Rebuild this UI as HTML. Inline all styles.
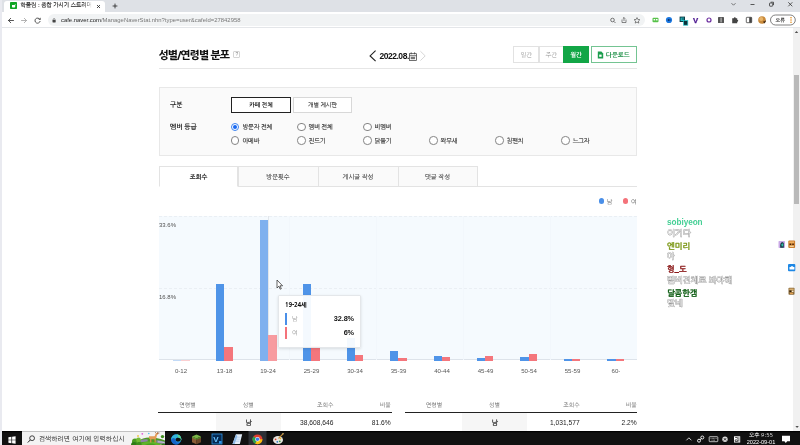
<!DOCTYPE html>
<html lang="ko">
<head>
<meta charset="utf-8">
<title>성별/연령별 분포</title>
<style>
html,body{margin:0;padding:0;}
body{width:800px;height:445px;overflow:hidden;background:#fff;position:relative;
  font-family:"Liberation Sans","NanumGothic","Noto Sans CJK KR",sans-serif;color:#222;}
.a{position:absolute;white-space:nowrap;line-height:1;}
.k{font-family:"NanumGothic","Liberation Sans","Noto Sans CJK KR",sans-serif;}
.b{font-weight:bold;}
/* chrome */
#tabstrip{left:0;top:0;width:800px;height:12px;background:#dee1e6;}
#tab{left:3.500px;top:1px;width:101.500px;height:12px;background:#fff;border-radius:3px 3px 0 0;}
#toolbar{left:0;top:12px;width:800px;height:16px;background:#fff;border-bottom:1px solid #e4e6e9;box-sizing:border-box;}
#omni{left:48px;top:14px;width:597px;height:12px;border-radius:6px;background:#f1f3f4;}
.t5{font-size:5.4px;}
.t6{font-size:6px;}
/* page */
.btn{box-sizing:border-box;border:1px solid #e2e2e2;background:#fff;text-align:center;}
.radio{width:8.400px;height:8.400px;border:0.800px solid #858585;border-radius:50%;box-sizing:border-box;background:#fff;}
.rl{font-size:6.200px;color:#333;letter-spacing:-0.200px;margin-top:0.400px;-webkit-text-stroke:0.150px #333;}
.tab{box-sizing:border-box;border:1px solid #e3e3e3;background:#fafafa;height:21px;top:166px;text-align:center;font-size:6.2px;color:#444;line-height:20.600px;-webkit-text-stroke:0.120px #444;}
.bar{position:absolute;padding-bottom:0.600px;}
.bl{background:#4f94e8;}
.rd{background:#f4767c;}
.xl{font-size:6.100px;color:#585858;top:367.800px;width:40px;text-align:center;font-family:"Liberation Sans",sans-serif;}
.th{font-size:5.830px;color:#666;top:402.600px;}
.td{font-size:6.67px;color:#222;top:419.500px;font-family:"Liberation Sans","NanumGothic",sans-serif;}
.chat{font-size:8.100px;left:667px;font-weight:bold;-webkit-text-stroke:0.250px currentColor;}
.msg{font-size:8.400px;left:667px;color:#fdfdfd;-webkit-text-stroke:0.900px #989898;paint-order:stroke fill;}
</style>
</head>
<body>
<div id="wrap" style="position:absolute;left:0;top:0;width:800px;height:445px;overflow:hidden;will-change:transform;">
<!-- ===== browser chrome ===== -->
<div class="a" id="tabstrip"></div>
<div class="a" id="tab"></div>
<svg class="a" style="left:10px;top:2.200px" width="7" height="7" viewBox="0 0 7 7"><rect width="7" height="7" rx="0.700" fill="#0fa524"/><path d="M2 3h2.600l.500-.900.500.300-.400.800v1.600a.800.800 0 0 1-.800.800H2.800a.800.800 0 0 1-.800-.800z" fill="#fff"/></svg>
<div class="a k t5" style="left:20.500px;top:3.100px;color:#1a1a1a;font-size:5.700px;letter-spacing:-0.050px;-webkit-text-stroke:0.150px #1a1a1a;">학폴림 : 종합 가시기 스트리머</div>
<div class="a" style="left:84px;top:1px;width:10px;height:11px;background:linear-gradient(90deg,rgba(255,255,255,0),#fff 80%);"></div>
<svg class="a" style="left:96px;top:3.500px" width="5" height="5" viewBox="0 0 5 5"><path d="M1 1l3 3M4 1L1 4" stroke="#222" stroke-width="0.800"/></svg>
<svg class="a" style="left:111.500px;top:2.600px" width="6" height="6" viewBox="0 0 6 6"><path d="M3 .600v4.800M.600 3h4.800" stroke="#222" stroke-width="0.800"/></svg>
<div class="a" id="toolbar"></div>
<svg class="a" style="left:0;top:12px" width="50" height="16" viewBox="0 0 50 16">
 <g fill="none" stroke="#444" stroke-width="0.9" stroke-linecap="round" stroke-linejoin="round">
  <path d="M8.5 8.5h5M8.5 8.5l2.2-2.2M8.5 8.5l2.2 2.2"/>
  <path d="M21.5 8.5h5M26.5 8.5l-2.2-2.2M26.5 8.5l-2.2 2.2" stroke="#aaa"/>
  <path d="M39.8 7.2a2.6 2.6 0 1 0 .3 2.2"/>
 </g>
 <path d="M40.6 5.5v2.2h-2.2z" fill="#444"/>
</svg>
<div class="a" id="omni"></div>
<svg class="a" style="left:52.400px;top:17.600px" width="4.200" height="5" viewBox="0 0 5 6"><rect x="0.6" y="2.4" width="3.8" height="3" rx="0.5" fill="#444"/><path d="M1.4 2.6V1.8a1.1 1.1 0 0 1 2.2 0v.8" fill="none" stroke="#444" stroke-width="0.7"/></svg>
<div class="a" style="left:61px;top:17.700px;font-size:5.900px;color:#222;">cafe.naver.com<span style="color:#777">/ManageNaverStat.nhn?type=user&amp;cafeId=27842958</span></div>
<!-- window controls -->
<svg class="a" style="left:725px;top:0" width="75" height="12" viewBox="0 0 75 12">
 <g fill="none" stroke="#333" stroke-width="0.8">
  <path d="M6.5 3.2l2 2 2-2" stroke="#555"/>
  <path d="M25.5 4.5h4"/>
  <rect x="44.5" y="3" width="3.2" height="3.2" rx="0.5"/><path d="M45.7 2.2h2.8v2.8"/>
  <path d="M63.3 2.3l4 4M67.3 2.3l-4 4"/>
 </g>
</svg>
<!-- toolbar right icons -->
<svg class="a" style="left:480px;top:12px" width="320" height="16" viewBox="0 0 320 16">
 <g fill="none" stroke="#555" stroke-width="0.8" transform="translate(108.500 0)">
  <circle cx="24" cy="8" r="1.8"/><path d="M25.4 9.4l1.6 1.6"/>
  <path d="M33.5 7.5v3h4v-3M35.5 9V5.5M34.3 6.7l1.2-1.2 1.2 1.2" stroke-width="0.7"/>
  <path d="M48.5 5.6l.9 1.9 2 .2-1.5 1.4.4 2-1.8-1-1.8 1 .4-2-1.5-1.4 2-.2z" stroke-width="0.7"/>
 </g>
 <rect x="172.5" y="5.8" width="6" height="4.4" rx="1" fill="#57c24a"/><rect x="173.6" y="7" width="1.6" height="1.4" fill="#fff"/><rect x="176" y="7" width="1.6" height="1.4" fill="#fff"/>
 <circle cx="189" cy="8" r="3.1" fill="#1c78e0"/><path d="M187.4 8l1.6-1.2v.8h1.6v.8h-1.6v.8z" fill="#0b2b5c"/>
 <rect x="199.600" y="4.600" width="5.400" height="5.400" fill="#0e3a44"/><rect x="200.600" y="5.600" width="3.400" height="3.400" fill="#27c6cc"/><rect x="201.600" y="6.500" width="2.400" height="1" fill="#0e3a44"/><rect x="203.600" y="8.600" width="4.200" height="4.600" fill="#0b2f38" stroke="#27c6cc" stroke-width="0.700"/>
 <text x="213" y="10.6" font-family="Liberation Sans, sans-serif" font-weight="bold" font-size="7.800" fill="#4b168f" stroke="#4b168f" stroke-width="0.250">V</text>
 <circle cx="229" cy="8" r="2" fill="none" stroke="#6a2c9e" stroke-width="1.2"/>
 <rect x="238" y="5" width="6" height="6" rx="0.6" fill="#555"/><rect x="240.6" y="5.6" width="0.9" height="4.8" fill="#ddd"/>
 <path d="M252.2 6.2h1.6a1 1 0 1 1 2 0h1.4v1.6a1 1 0 1 1 0 2v1.4h-5z" fill="#444"/>
 <rect x="266.3" y="5.3" width="5.4" height="5.4" rx="0.6" fill="none" stroke="#444" stroke-width="0.8"/><rect x="269.2" y="5.3" width="2.5" height="5.4" fill="#444"/>
 <circle cx="282" cy="8" r="3.8" fill="#c98a3b"/><circle cx="281.2" cy="7" r="2" fill="#e8b56b"/><path d="M283 9.5a2 2 0 0 0 2.4-1.5l.4 1.8-1.6 1.6z" fill="#3a2412"/>
 <rect x="290.5" y="3" width="24.8" height="10" rx="5" fill="#fff" stroke="#4a4a4a" stroke-width="0.7"/>
 <circle cx="311" cy="5.800" r="0.750" fill="#e5860a"/><circle cx="311" cy="8" r="0.750" fill="#e5860a"/><circle cx="311" cy="10.200" r="0.750" fill="#e5860a"/>
</svg>
<div class="a k" style="left:775.600px;top:17.700px;font-size:5px;color:#333;font-weight:bold;">오류</div>

<!-- page scrollbar -->
<div class="a" style="left:0;top:0;width:1.500px;height:431px;background:#e9eaf0;"></div>
<div class="a" style="left:793.300px;top:28px;width:6.700px;height:403px;background:#f1f1f1;"></div>
<svg class="a" style="left:793.800px;top:423px" width="6.200" height="8" viewBox="0 0 6.200 8"><path d="M1.400 3l1.700 2 1.700-2z" fill="#505050"/></svg>
<div class="a" style="left:794.100px;top:75px;width:4.900px;height:129px;background:#b9b9b9;"></div>
<svg class="a" style="left:793px;top:28px" width="7" height="8" viewBox="0 0 7 8"><path d="M1.8 5l1.7-2 1.7 2z" fill="#505050"/></svg>

<!-- ===== page content ===== -->
<div class="a k" id="h1" style="font-weight:800;left:158.500px;top:51.200px;font-size:10.900px;letter-spacing:-0.920px;color:#111;">성별/연령별 분포</div>
<div class="a" style="left:233.400px;top:51.200px;width:7px;height:7px;box-sizing:border-box;border:0.700px solid #d4d4d4;border-radius:1px;font-size:5px;color:#888;text-align:center;line-height:5.800px;">?</div>

<svg class="a" style="left:365px;top:46px" width="70" height="20" viewBox="0 0 70 20">
 <path d="M10.6 4.600L5.100 9.900l5.500 5.300" fill="none" stroke="#222" stroke-width="1.150"/>
 <path d="M55.4 5.2l4.8 4.7-4.8 4.7" fill="none" stroke="#ccc" stroke-width="0.8"/>
 <g fill="none" stroke="#333" stroke-width="0.7"><rect x="44.400" y="7.700" width="7" height="6.800"/><path d="M44.400 9.700h7M46.200 6.300v2M49.600 6.300v2"/></g>
 <rect x="45.700" y="10.800" width="4.400" height="2.400" fill="#777"/>
</svg>
<div class="a b" id="date" style="left:379.400px;top:51.500px;font-size:8.500px;letter-spacing:-0.460px;color:#111;">2022.08.</div>

<div class="a btn" style="left:512.800px;top:46px;width:26.700px;height:17px;"></div>
<div class="a btn" style="left:538.5px;top:46px;width:25.5px;height:17px;"></div>
<div class="a" style="left:563px;top:46px;width:26px;height:17px;background:#12a646;"></div>
<div class="a" style="left:591px;top:46px;width:46px;height:17px;box-sizing:border-box;border:1px solid #74c492;background:#fff;"></div>
<div class="a k" style="left:520.5px;top:52px;font-size:6.2px;color:#999;">일간</div>
<div class="a k" style="left:545.5px;top:52px;font-size:6.2px;color:#999;">주간</div>
<div class="a k b" style="left:570.3px;top:52px;font-size:6.2px;color:#fff;">월간</div>
<svg class="a" style="left:597px;top:51.2px" width="7" height="8" viewBox="0 0 7 8"><path d="M0.8 0.6h3.6l1.8 1.8v5H0.8z" fill="#1c9e4e"/><rect x="2.2" y="3.6" width="2.4" height="2.2" fill="#fff"/></svg>
<div class="a k b" style="left:606px;top:52px;font-size:6.3px;color:#138a3e;">다운로드</div>

<div class="a" style="left:158.600px;top:68px;width:478.400px;height:1px;background:#e6e6e6;"></div>

<!-- filter box -->
<div class="a" style="left:158.600px;top:87.300px;width:478.400px;height:68.700px;box-sizing:border-box;border:1px solid #e8e8e8;background:#fafafa;"></div>
<div class="a k b" style="left:170px;top:101.5px;font-size:6.6px;color:#222;">구분</div>
<div class="a k b" style="left:170px;top:123.5px;font-size:6.6px;color:#222;">멤버 등급</div>
<div class="a btn k b" style="left:231px;top:97px;width:60px;height:16px;border-color:#222;font-size:5.8px;line-height:14px;color:#111;">카페 전체</div>
<div class="a btn k" style="left:293px;top:97px;width:59px;height:16px;border-color:#d8d8d8;font-size:5.800px;line-height:14px;color:#333;-webkit-text-stroke:0.120px #333;">개별 게시판</div>

<div class="a radio" style="left:231.10px;top:122.90px;border-color:#3b82f0;"></div>
<div class="a" style="left:233.10px;top:124.90px;width:4.4px;height:4.4px;border-radius:50%;background:#1667f2;"></div>
<div class="a k rl" style="left:242.50px;top:124.00px;">방문자 전체</div>
<div class="a radio" style="left:297.13px;top:122.90px;"></div>
<div class="a k rl" style="left:308.53px;top:124.00px;">멤버 전체</div>
<div class="a radio" style="left:363.16px;top:122.90px;"></div>
<div class="a k rl" style="left:374.56px;top:124.00px;">비멤버</div>
<div class="a radio" style="left:231.10px;top:136.30px;"></div>
<div class="a k rl" style="left:242.50px;top:137.40px;">아메바</div>
<div class="a radio" style="left:297.13px;top:136.30px;"></div>
<div class="a k rl" style="left:308.53px;top:137.40px;">진드기</div>
<div class="a radio" style="left:363.16px;top:136.30px;"></div>
<div class="a k rl" style="left:374.56px;top:137.40px;">닭둘기</div>
<div class="a radio" style="left:429.19px;top:136.30px;"></div>
<div class="a k rl" style="left:440.59px;top:137.40px;">왁무새</div>
<div class="a radio" style="left:495.22px;top:136.30px;"></div>
<div class="a k rl" style="left:506.62px;top:137.40px;">침팬치</div>
<div class="a radio" style="left:561.25px;top:136.30px;"></div>
<div class="a k rl" style="left:572.65px;top:137.40px;">느그자</div>

<!-- tabs -->
<div class="a" style="left:158.600px;top:186px;width:478.400px;height:1px;background:#e3e3e3;"></div>
<div class="a tab k" style="left:237.5px;width:81px;">방문횟수</div>
<div class="a tab k" style="left:317.5px;width:81px;">게시글 작성</div>
<div class="a tab k" style="left:397.5px;width:80px;">댓글 작성</div>
<div class="a tab k b" style="left:158.600px;width:79.900px;background:#fff;border-bottom-color:#fff;color:#222;">조회수</div>

<!-- legend -->
<div class="a" style="left:598.700px;top:198.300px;width:5.400px;height:5.400px;border-radius:50%;background:#4a8fe8;"></div>
<div class="a k" style="left:606.800px;top:198.600px;font-size:6.200px;color:#666;">남</div>
<div class="a" style="left:622.900px;top:198.300px;width:5.400px;height:5.400px;border-radius:50%;background:#f4727a;"></div>
<div class="a k" style="left:631px;top:198.600px;font-size:6.200px;color:#666;">여</div>

<!-- chart -->
<div class="a" id="chart" style="left:159px;top:216px;width:478px;height:144px;background:#f5fafe;"></div>
<div class="a" style="left:159px;top:216px;width:478px;height:0;border-top:1px dashed #eaeff4;"></div>
<div class="a" style="left:159px;top:287.5px;width:478px;height:0;border-top:1px dashed #eaeff4;"></div>
<div class="a" style="left:159px;top:359.300px;width:478px;height:1px;background:#dde3ea;"></div>
<div class="a" style="left:289px;top:216px;width:1px;height:144px;background:#f2f7fc;"></div>
<div class="a" style="left:376px;top:216px;width:1px;height:144px;background:#f2f7fc;"></div>
<div class="a" style="left:463px;top:216px;width:1px;height:144px;background:#f2f7fc;"></div>
<div class="a" style="left:550px;top:216px;width:1px;height:144px;background:#f2f7fc;"></div>
<div class="a" style="left:267.800px;top:216px;width:1px;height:144px;background:#e2e6eb;"></div>
<div class="a" style="left:159px;top:222.300px;font-size:6px;color:#505050;">33.6%</div>
<div class="a" style="left:159px;top:293.900px;font-size:6px;color:#505050;">16.8%</div>

<div class="bar bl" style="left:172.5px;top:359.5px;width:8.5px;height:1px;opacity:.35"></div>
<div class="bar rd" style="left:181px;top:359.5px;width:8.5px;height:1px;opacity:.35"></div>
<div class="bar bl" style="left:216px;top:284px;width:8.3px;height:76px;"></div>
<div class="bar rd" style="left:224.3px;top:346.5px;width:8.3px;height:13.5px;"></div>
<div class="bar" style="left:259.5px;top:220px;width:8.5px;height:140px;background:#7fb0ee;"></div>
<div class="bar" style="left:268px;top:335px;width:8.5px;height:25px;background:#f79ba0;"></div>
<div class="bar bl" style="left:303px;top:283.5px;width:8.3px;height:76.5px;"></div>
<div class="bar rd" style="left:311.3px;top:346px;width:8.3px;height:14px;"></div>
<div class="bar bl" style="left:346.5px;top:338.200px;width:8.3px;height:21.800px;"></div>
<div class="bar rd" style="left:354.8px;top:354.5px;width:8.3px;height:5.5px;"></div>
<div class="bar bl" style="left:390px;top:351px;width:8.3px;height:9px;"></div>
<div class="bar rd" style="left:398.3px;top:357.5px;width:8.3px;height:2.5px;"></div>
<div class="bar bl" style="left:433.5px;top:356px;width:8.3px;height:4px;"></div>
<div class="bar rd" style="left:441.8px;top:357px;width:8.3px;height:3px;"></div>
<div class="bar bl" style="left:476.8px;top:357.5px;width:8.3px;height:2.5px;"></div>
<div class="bar rd" style="left:485.1px;top:355.5px;width:8.3px;height:4.5px;"></div>
<div class="bar bl" style="left:520.3px;top:357px;width:8.3px;height:3px;"></div>
<div class="bar rd" style="left:528.6px;top:353.5px;width:8.3px;height:6.5px;"></div>
<div class="bar bl" style="left:563.8px;top:359px;width:8.3px;height:1.5px;"></div>
<div class="bar rd" style="left:572.1px;top:359px;width:8.3px;height:1.5px;"></div>
<div class="bar bl" style="left:607.3px;top:359px;width:8.3px;height:1.5px;"></div>
<div class="bar rd" style="left:615.6px;top:359px;width:8.3px;height:1.5px;"></div>

<div class="a xl" style="left:161px;">0-12</div>
<div class="a xl" style="left:204.5px;">13-18</div>
<div class="a xl" style="left:248px;">19-24</div>
<div class="a xl" style="left:291.5px;">25-29</div>
<div class="a xl" style="left:335px;">30-34</div>
<div class="a xl" style="left:378.5px;">35-39</div>
<div class="a xl" style="left:422px;">40-44</div>
<div class="a xl" style="left:465.5px;">45-49</div>
<div class="a xl" style="left:509px;">50-54</div>
<div class="a xl" style="left:552.5px;">55-59</div>
<div class="a xl" style="left:596px;">60-</div>

<!-- tooltip -->
<div class="a" id="tip" style="left:278.200px;top:295px;width:83px;height:53px;box-sizing:border-box;background:rgba(255,255,255,.94);border:1px solid #e4e7ea;border-radius:1px;box-shadow:0 1px 3px rgba(0,0,0,.12);"></div>
<div class="a k" style="left:285px;top:302px;font-size:6.100px;font-weight:800;letter-spacing:-0.200px;color:#111;">19-24세</div>
<div class="a" style="left:285px;top:313px;width:1.6px;height:12px;background:#4a8fe8;"></div>
<div class="a" style="left:285px;top:327px;width:1.6px;height:12px;background:#f4727a;"></div>
<div class="a k" style="left:292px;top:316px;font-size:6.2px;color:#999;">남</div>
<div class="a k" style="left:292px;top:330px;font-size:6.2px;color:#999;">여</div>
<div class="a b" style="left:314px;top:315.2px;width:40px;text-align:right;font-size:7.3px;letter-spacing:-0.1px;color:#111;">32.8%</div>
<div class="a b" style="left:314px;top:329.2px;width:40px;text-align:right;font-size:7.3px;letter-spacing:-0.1px;color:#111;">6%</div>
<!-- cursor -->
<svg class="a" style="left:276px;top:279px" width="8" height="12" viewBox="0 0 8 12"><path d="M1 1v8l1.9-1.8 1.3 3 1.1-.5-1.3-2.9H6.600z" fill="#fff" stroke="#222" stroke-width="0.7" stroke-linejoin="round"/></svg>

<!-- tables -->
<div class="a k th" style="left:167.5px;width:40px;text-align:center;">연령별</div>
<div class="a k th" style="left:228.2px;width:40px;text-align:center;">성별</div>
<div class="a k th" style="left:293.5px;width:40px;text-align:right;">조회수</div>
<div class="a k th" style="left:350.7px;width:40px;text-align:right;">비율</div>
<div class="a k th" style="left:413.9px;width:40px;text-align:center;">연령별</div>
<div class="a k th" style="left:474.5px;width:40px;text-align:center;">성별</div>
<div class="a k th" style="left:539.8px;width:40px;text-align:right;">조회수</div>
<div class="a k th" style="left:596.7px;width:40px;text-align:right;">비율</div>
<div class="a" style="left:158.4px;top:411.8px;width:233.2px;height:1.1px;background:#222;"></div>
<div class="a" style="left:404.7px;top:411.8px;width:232.2px;height:1.1px;background:#222;"></div>
<div class="a" style="left:215.6px;top:413px;width:65.7px;height:18px;background:#f6f6f6;"></div>
<div class="a" style="left:461.6px;top:413px;width:65.9px;height:18px;background:#f6f6f6;"></div>
<div class="a k td" style="-webkit-text-stroke:0.250px #222;left:228.400px;width:40px;text-align:center;">남</div>
<div class="a k td" style="-webkit-text-stroke:0.250px #222;left:474.700px;width:40px;text-align:center;">남</div>
<div class="a td" style="left:273.4px;width:60px;text-align:right;">38,608,646</div>
<div class="a td" style="left:350.7px;width:40px;text-align:right;">81.6%</div>
<div class="a td" style="left:519.7px;width:60px;text-align:right;">1,031,577</div>
<div class="a td" style="left:596.7px;width:40px;text-align:right;">2.2%</div>

<!-- chat overlay -->
<div class="a" style="left:637px;top:192px;width:156.300px;height:125px;background:#fff;"></div>
<div class="a chat" style="top:218.800px;color:#45cf95;-webkit-text-stroke:0;font-size:8.200px;letter-spacing:-0.050px;">sobiyeon</div>
<div class="a k msg" style="top:229px;">이거다</div>
<div class="a k chat" style="top:241.5px;color:#7f9a1c;">엔미리</div>
<div class="a k msg" style="top:252px;">아</div>
<div class="a k chat" style="top:265px;color:#8a1717;">형_도</div>
<div class="a k msg" style="top:275.5px;">멤버전체로 봐야해</div>
<div class="a k chat" style="top:288.5px;color:#0c5c12;">달콤한갬</div>
<div class="a k msg" style="top:299px;">맞네</div>
<svg class="a" style="left:776px;top:238px" width="22" height="60" viewBox="0 0 22 60">
 <rect x="2.500" y="3" width="6.500" height="7" rx="0.800" fill="#c9a9e6"/><path d="M4.200 9.800V7.200c0-1.600.700-2.800 2-3 .9-.1 1.600.5 1.600 1.300v4.300z" fill="#163646"/><path d="M5.300 6.200c.5-.9 1.500-1 2-.3l-.300 2.300-1.300.2z" fill="#2fbfa6"/>
 <rect x="12.300" y="2.600" width="6.800" height="7.400" rx="1" fill="#c97a2c"/><rect x="13.300" y="3.400" width="4.800" height="2" fill="#f0b060"/><rect x="13.600" y="5.600" width="1.500" height="1.300" fill="#3a1d08"/><rect x="16.300" y="5.600" width="1.500" height="1.300" fill="#3a1d08"/><rect x="13.600" y="7.600" width="4.200" height="1.500" fill="#f6d39a"/>
 <rect x="12" y="26" width="7.300" height="7.200" rx="1" fill="#1e88e5"/><path d="M13.500 31.400v-2.300h1.100l.7-.9h1.400l.7.900h1v2.300z" fill="#fff"/>
 <rect x="12.500" y="49.700" width="6" height="7" rx="0.800" fill="#8a6a3a"/><rect x="13.300" y="50.500" width="4.400" height="1.600" fill="#d8b070"/><rect x="13.500" y="52.600" width="1.500" height="1.400" fill="#2a1a0a"/><rect x="16" y="52.600" width="1.500" height="1.400" fill="#f4e8d0"/><rect x="14" y="54.700" width="3" height="1.300" fill="#e0a050"/>
</svg>
<!-- ===== taskbar ===== -->
<div class="a" id="tb" style="left:0;top:431px;width:800px;height:17px;background:#111;box-shadow:inset 0 1.300px 0 #000;">
<div class="a" style="left:0;top:0;width:2px;height:17px;background:#e9eaf0;"></div>
<svg class="a" style="left:8px;top:4.700px" width="8" height="8" viewBox="0 0 8 8"><path d="M0.400 1.250l3-.42v2.820h-3zM4.100.750l3.500-.5v3.400H4.100zM0.400 4.350h3v2.820l-3-.42zM4.100 4.350h3.500v3.400l-3.500-.5z" fill="#fff"/></svg>
<div class="a" style="left:22px;top:0;width:143px;height:17px;background:#f3f3f3;border-top:0.600px solid #c2c2c2;box-sizing:border-box;"></div>
<svg class="a" style="left:26.500px;top:4.300px" width="8.500" height="8.500" viewBox="0 0 8.500 8.500"><circle cx="5.100" cy="3.200" r="2.400" fill="none" stroke="#222" stroke-width="0.850"/><path d="M3.400 4.900L0.800 7.500" stroke="#222" stroke-width="1"/></svg>
<div class="a k" style="left:38.700px;top:4.900px;font-size:6.500px;letter-spacing:0.200px;color:#111;">검색하려면 여기에 입력하십시</div>
<!-- search highlight art -->
<svg class="a" style="left:129px;top:0.600px" width="36" height="16.400" viewBox="0 0 36 16.400">
 <path d="M9 9.500c3-3.200 8-4.300 13-4 5 .3 10 1.300 14 3v4H9z" fill="#4f9a24"/>
 <path d="M11 8.200c2.500-1 5-1.200 7.500-.9l.3 2.100-7.300.8z" fill="#8b87a6"/>
 <path d="M27.500 8.300c2.800 0 5.700.6 8.500 1.500v2.400c-2.800-.6-5.700-.900-8.800-.9z" fill="#8b87a6"/><path d="M29 9.800c2 0 4.500.3 6.500.8" stroke="#f2f0f6" stroke-width="0.600" fill="none"/>
 <path d="M8 16.400c1-4.200 6-7 13-7s12 3 14.500 7z" fill="#5fb32a"/>
 <path d="M13 16.400c1.500-3 4.500-4.800 8.500-4.800s7 1.800 8.500 4.800z" fill="#46a01e"/>
 <path d="M19.500 16.400c.5-1.300 1.300-2 2.300-2s1.800.7 2.300 2z" fill="#1c3a10"/>
 <circle cx="6" cy="9.500" r="3" fill="#4c9c22"/><circle cx="9.500" cy="8" r="2.400" fill="#74bb34"/><circle cx="5" cy="13" r="3" fill="#2f7d16"/><circle cx="10" cy="12.500" r="2.600" fill="#3d8f1c"/>
 <circle cx="33.500" cy="4.600" r="1.700" fill="#3f8f1e"/><circle cx="34.500" cy="14" r="2.600" fill="#2f7d16"/>
 <path d="M20 4.200h5.600l1.300-3 1.900-.5.700 1.300-1.500 1-.6 2.700-.7 1.200v3.600h-1.100V7.300h-3.300v3.200h-1.100V7.200l-1.200-1z" fill="#e39a55"/>
 <path d="M27 1.200l-.9-1.200M28 .9l1.600-.9M28.300 1.500l2.200-.5" stroke="#8a4a2a" stroke-width="0.600" fill="none"/>
 <path d="M22 9.200h.9M25 9.200h.9" stroke="#b8642a" stroke-width="0.900"/>
 <circle cx="13.300" cy="1.800" r=".9" fill="#e25ad8"/><circle cx="19.800" cy="1.500" r=".8" fill="#4fc0f0"/><circle cx="9" cy="4" r=".9" fill="#f0c23c"/>
</svg>
<!-- taskbar icons -->
<svg class="a" style="left:166px;top:0" width="130" height="17" viewBox="0 0 130 17">
 <circle cx="10.200" cy="8.300" r="5.100" fill="#1878d6"/>
 <path d="M5.200 9.300A5.100 5.100 0 0 1 15.300 7.700C15.500 9.400 14.600 10.300 13.300 10.300H9.800C9.800 8.200 8.400 6.800 6.600 7.600 5.800 8 5.300 8.600 5.200 9.300z" fill="#34b4d8"/>
 <path d="M10.600 3.220A5.100 5.100 0 0 1 15.300 7.700C15.500 9.400 14.600 10.300 13.300 10.300H12C13.500 8 12.500 5 10.600 3.220z" fill="#58d892"/>
 <path d="M9.600 8.300c.3-1.500 2.600-2 4.400-1 .9.500 1.100 1.500.5 2.300-.8.900-2.400 1.100-3.600.7-1-.4-1.500-1.100-1.300-2z" fill="#111"/>
 <path d="M6.600 7.600c1.800-.8 3.200.6 3.200 2.700 0 1.600 1.500 2.700 3.600 2.200a5.100 5.100 0 0 1-8.200-3.200c.1-.7.600-1.300 1.400-1.700z" fill="#1564c8"/>
 <path d="M26 5.600l4.500-2 4.500 2-4.500 2z" fill="#7ab648"/><path d="M26 5.600l4.500 2v5.600l-4.500-2z" fill="#8a5c36"/><path d="M35 5.600l-4.500 2v5.600l4.500-2z" fill="#6e4728"/>
 <path d="M26 5.600l4.500 2v1.200l-4.500-2z" fill="#5f9a36"/><path d="M35 5.600l-4.500 2v1.200l4.500-2z" fill="#4f8a2c"/>
 <rect x="46" y="3" width="10" height="10" fill="#062a52" stroke="#2f95e6" stroke-width="0.800"/>
 <text x="47.300" y="10.800" font-family="Liberation Sans, sans-serif" font-weight="bold" font-size="8" fill="#6cc4ff">V</text>
 <rect x="53" y="10" width="2.600" height="2.600" fill="#2f95e6"/>
 <path d="M70 3.300h6.200l-2.400 9.600h-7.300z" fill="#e4eef9"/><path d="M70 3.300l-3.500 9.600h2.200l2.700-7.600z" fill="#8db9e6"/><path d="M70.800 6.200h3.600M70.200 8.200h3.600M69.600 10.200h3.600" stroke="#9cc3ea" stroke-width="0.600"/>
 <rect x="82.500" y="0" width="18" height="17" fill="#2c2f35"/>
 <circle cx="91.500" cy="8.300" r="4.900" fill="#e03e30"/>
 <path d="M91.500 8.300L87.260 5.850A4.900 4.900 0 0 0 89.050 12.540z" fill="#2ca14b"/>
 <path d="M87.260 5.850A4.900 4.900 0 0 0 89.050 12.540L91.500 8.300z" fill="#2ca14b"/>
 <path d="M91.500 8.300l-2.450 4.240A4.900 4.900 0 0 0 96.400 8.300z" fill="#f8c10c"/>
 <path d="M91.500 8.300L87.260 5.850a4.900 4.900 0 0 0-.66 2.450 4.900 4.900 0 0 0 2.450 4.240z" fill="#2ca14b"/>
 <circle cx="91.500" cy="8.300" r="2.300" fill="#fff"/><circle cx="91.500" cy="8.300" r="1.750" fill="#3b7ded"/>
 <ellipse cx="112" cy="9" rx="5" ry="4" fill="#e8e6e0"/><circle cx="109.600" cy="8.300" r=".9" fill="#d8402e"/><circle cx="111.300" cy="10.800" r=".9" fill="#2a79c8"/><circle cx="113.800" cy="10.300" r=".9" fill="#3aa040"/><circle cx="114.500" cy="7.600" r=".8" fill="#e9b320"/>
 <path d="M112.500 7.500l4.200-4.400" stroke="#c8923a" stroke-width="1.100"/><circle cx="117" cy="2.800" r=".8" fill="#e8c070"/>
</svg>
<!-- tray -->
<svg class="a" style="left:680px;top:0" width="120" height="17" viewBox="0 0 120 17">
 <path d="M6.400 9.300l2.500-2.500 2.500 2.500" fill="none" stroke="#fff" stroke-width="0.800"/>
 <g fill="none" stroke="#fff" stroke-width="0.900"><circle cx="19" cy="9.700" r="1.500"/><circle cx="22.300" cy="6.500" r="1.500"/><path d="M19.800 9l1.800-1.800"/></g>
 <rect x="29.200" y="5.700" width="8.600" height="5" rx="0.600" fill="none" stroke="#fff" stroke-width="0.700"/><path d="M30.600 7.400h6M31.600 9.200h3.800" stroke="#fff" stroke-width="0.600" stroke-dasharray="0.800 0.500"/>
 <circle cx="45" cy="8.300" r="2.700" fill="#d8d8d8"/><path d="M43.900 7.200l2.200 2.200M46.100 7.200l-2.200 2.200" stroke="#111" stroke-width="0.800"/>
 <rect x="54" y="5.300" width="6.200" height="6.200" fill="#fff"/><path d="M55.200 6.500h2.200v1.300M58.900 6.200v4.400M55.200 8.900h2.500v1.600h-2.500z" fill="none" stroke="#111" stroke-width="0.700"/>
 <path d="M102 4.700h8v5.600h-2.800l-1.400 1.700-1.400-1.700H102z" fill="#fff"/>
</svg>
<div class="a k" style="left:741px;top:1.700px;width:40px;text-align:center;font-size:5.600px;color:#fff;">오후 9:55</div>
<div class="a" style="left:741px;top:9px;width:40px;text-align:center;font-size:5.600px;color:#fff;">2022-09-01</div>
</div>
</div>
</body>
</html>
